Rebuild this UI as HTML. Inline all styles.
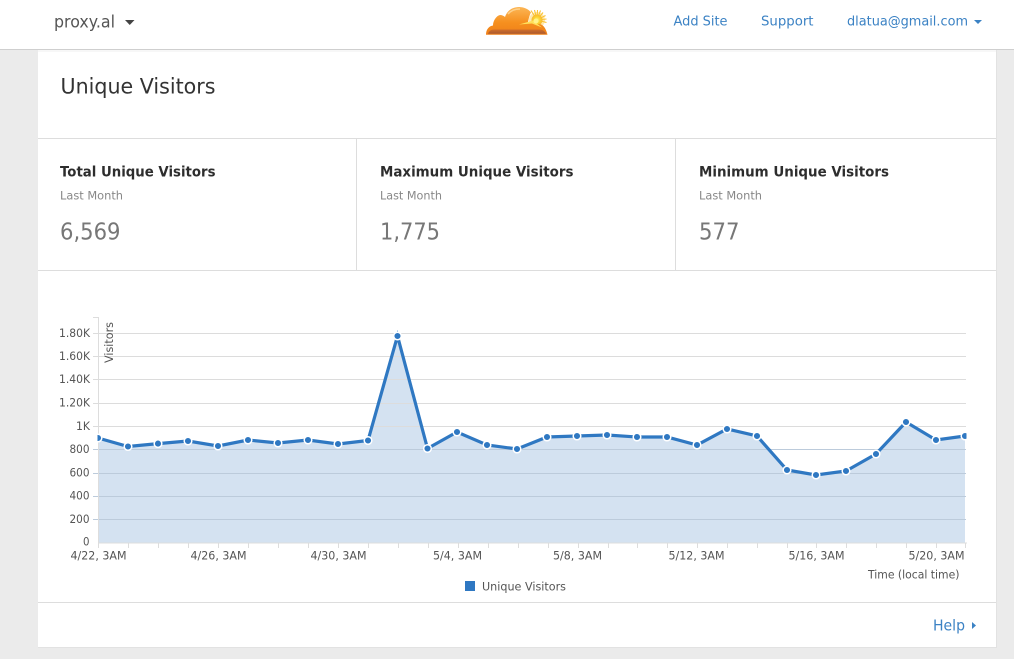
<!DOCTYPE html>
<html><head><meta charset="utf-8"><style>
html,body{margin:0;padding:0;width:1014px;height:659px;overflow:hidden;background:#ebebeb}
svg{display:block}
text{font-family:"DejaVu Sans","Liberation Sans",sans-serif;transform:translateY(-.7px)}
.a{fill:#555;font-size:11.500px}
text.v{transform:translate(113px,363px) rotate(-90deg);transform-origin:0 0}
</style></head><body>
<svg width="1014" height="659" viewBox="0 0 1014 659" xmlns="http://www.w3.org/2000/svg">
<defs>
<linearGradient id="c" x1="0" y1="0" x2="0" y2="1"><stop offset="0" stop-color="#fcb655"/><stop offset=".55" stop-color="#f6901f"/><stop offset="1" stop-color="#ef7f18"/></linearGradient>
<linearGradient id="b" x1="0" y1="0" x2="0" y2="1"><stop offset="0" stop-color="#d26f2a"/><stop offset="1" stop-color="#a9592f"/></linearGradient>
<radialGradient id="s"><stop offset="0" stop-color="#fff27a"/><stop offset=".6" stop-color="#fbd02e"/><stop offset="1" stop-color="#f9b82f"/></radialGradient>
<clipPath id="pc"><rect x="97.500" y="300" width="869" height="245"/></clipPath>
</defs>
<rect width="1014" height="659" fill="#ebebeb"/>
<rect x="38" y="50" width="959" height="598" fill="#e2e2e2"/>
<rect x="38" y="50" width="958" height="597" fill="#fff"/>
<rect x="38" y="50" width="958" height="2" fill="#f7f7f7"/>
<rect x="0" y="0" width="1014" height="49" fill="#fff"/>
<rect x="0" y="49" width="1014" height="1" fill="#cfcfcf"/>

<text x="54" y="28" font-size="17" fill="#555" textLength="61" lengthAdjust="spacingAndGlyphs">proxy.al</text>
<path d="M125 20h9.500l-4.750 5z" fill="#444"/>

<!-- logo -->
<g>
<circle cx="537" cy="20" r="8" fill="#fde08a" opacity=".7"/>
<g stroke="#fbc233" stroke-width="1.100">
<path d="M537 20L531 10.500M537 20L534.500 10M537 20L537.500 10M537 20L540.500 10.500M537 20L543 12.500M537 20L545.500 15.500M537 20L546.500 19M537 20L546.500 22.500"/>
</g>
<circle cx="537" cy="20" r="5.500" fill="url(#s)"/>
<path d="M486 34.700C486 29.500 489 26 493 25.500C493 21 496 16 500 15C502 15 504 16 505 17C507 11 512 7 519 7C524 7 528.500 9 531 12.500C529.500 15 528.500 19 528 22.500L537 24.300C541.500 23 545.500 26.500 547.500 34.700Z" fill="url(#c)"/>
<path d="M488 33.800C489 31 491 29.500 494 29.500H539C542.500 29.500 545 31 546 33.800Z" fill="url(#b)"/>
<path d="M519 24.500L533 20.500L542 27.500L532 23.500Z" fill="#ffe05a"/>
<circle cx="536" cy="21" r="2.500" fill="#fff38a"/>
<path d="M508 14C511 10.500 515 9 520 9" stroke="#fdd08a" stroke-width="1.500" fill="none"/>
</g>

<text x="673.500" y="26" font-size="13.700" fill="#3b82c4" textLength="54" lengthAdjust="spacingAndGlyphs">Add Site</text>
<text x="761" y="26" font-size="13.700" fill="#3b82c4" textLength="52.500" lengthAdjust="spacingAndGlyphs">Support</text>
<text x="847" y="26" font-size="13.700" fill="#3b82c4" textLength="121" lengthAdjust="spacingAndGlyphs">dlatua@gmail.com</text>
<path d="M974 20h8l-4 4z" fill="#3b82c4"/>

<text x="60.500" y="94" font-size="21.500" fill="#333" textLength="155" lengthAdjust="spacingAndGlyphs">Unique Visitors</text>

<rect x="38" y="138" width="958" height="1" fill="#ddd"/>
<rect x="38" y="270" width="958" height="1" fill="#ddd"/>
<rect x="38" y="602" width="958" height="1" fill="#ddd"/>
<rect x="356" y="139" width="1" height="131" fill="#ddd"/>
<rect x="675" y="139" width="1" height="131" fill="#ddd"/>

<g font-size="14" font-weight="bold" fill="#2d2d2d">
<text x="60" y="177" textLength="155.500" lengthAdjust="spacingAndGlyphs">Total Unique Visitors</text>
<text x="380" y="177" textLength="193.500" lengthAdjust="spacingAndGlyphs">Maximum Unique Visitors</text>
<text x="699" y="177" textLength="190" lengthAdjust="spacingAndGlyphs">Minimum Unique Visitors</text>
</g>
<g font-size="11.700" fill="#888">
<text x="60" y="200" textLength="63" lengthAdjust="spacingAndGlyphs">Last Month</text>
<text x="380" y="200" textLength="62" lengthAdjust="spacingAndGlyphs">Last Month</text>
<text x="699" y="200" textLength="63" lengthAdjust="spacingAndGlyphs">Last Month</text>
</g>
<g font-size="23.500" fill="#777">
<text x="60" y="240" textLength="60.500" lengthAdjust="spacingAndGlyphs">6,569</text>
<text x="380" y="240" textLength="60" lengthAdjust="spacingAndGlyphs">1,775</text>
<text x="699" y="240" textLength="40.500" lengthAdjust="spacingAndGlyphs">577</text>
</g>

<!-- chart -->
<path d="M98 438L128 446.500 158 443.600 188 441 218 446 248 440 278 443 308 440 338 444 368 440.500 397.500 336 427.500 448.500 457 432 487 445 517 449 547 437 577 436 607 435 637 437 667 437 697 445 727 429 757 436 787 470 816 475 846 471 876 454 906 422 936 440 965 436V542.500H98z" fill="#d4e2f1"/>
<g stroke="#dcdcdc" stroke-width="1">
<path d="M93 333.500H966M93 356.500H966M93 379.500H966M93 403.500H966M93 426.500H966"/>
</g>
<g stroke="#bccbdb" stroke-width="1">
<path d="M93 449.500H966M93 473.500H966M93 496.500H966M93 519.500H966"/>
</g>
<path d="M93 317.500H98.500V543H967M98.500 543v5M128.500 543v5M158.500 543v5M188.500 543v5M218.500 543v5M248.500 543v5M278.500 543v5M308.500 543v5M338.500 543v5M368.500 543v5M398.500 543v5M428.500 543v5M458.500 543v5M488.500 543v5M518.500 543v5M548.500 543v5M578.500 543v5M608.500 543v5M637.500 543v5M667.500 543v5M697.500 543v5M727.500 543v5M757.500 543v5M787.500 543v5M816.500 543v5M846.500 543v5M876.500 543v5M906.500 543v5M936.500 543v5M965.500 543v5" stroke="#ddd" fill="none"/>
<g clip-path="url(#pc)">
<path d="M98 438L128 446.500 158 443.600 188 441 218 446 248 440 278 443 308 440 338 444 368 440.500 397.500 336 427.500 448.500 457 432 487 445 517 449 547 437 577 436 607 435 637 437 667 437 697 445 727 429 757 436 787 470 816 475 846 471 876 454 906 422 936 440 965 436" fill="none" stroke="#2f78c2" stroke-width="3.200"/>
<g fill="#2f78c2" stroke="#fff" stroke-width="1.500">
<circle cx="98" cy="438" r="3.800"/><circle cx="128" cy="446.500" r="3.800"/><circle cx="158" cy="443.600" r="3.800"/><circle cx="188" cy="441" r="3.800"/><circle cx="218" cy="446" r="3.800"/><circle cx="248" cy="440" r="3.800"/><circle cx="278" cy="443" r="3.800"/><circle cx="308" cy="440" r="3.800"/><circle cx="338" cy="444" r="3.800"/><circle cx="368" cy="440.500" r="3.800"/><circle cx="397.500" cy="336" r="3.800"/><circle cx="427.500" cy="448.500" r="3.800"/><circle cx="457" cy="432" r="3.800"/><circle cx="487" cy="445" r="3.800"/><circle cx="517" cy="449" r="3.800"/><circle cx="547" cy="437" r="3.800"/><circle cx="577" cy="436" r="3.800"/><circle cx="607" cy="435" r="3.800"/><circle cx="637" cy="437" r="3.800"/><circle cx="667" cy="437" r="3.800"/><circle cx="697" cy="445" r="3.800"/><circle cx="727" cy="429" r="3.800"/><circle cx="757" cy="436" r="3.800"/><circle cx="787" cy="470" r="3.800"/><circle cx="816" cy="475" r="3.800"/><circle cx="846" cy="471" r="3.800"/><circle cx="876" cy="454" r="3.800"/><circle cx="906" cy="422" r="3.800"/><circle cx="936" cy="440" r="3.800"/><circle cx="965" cy="436" r="3.800"/>
</g>
</g>

<g class="a">
<text x="59" y="337.500" textLength="31" lengthAdjust="spacingAndGlyphs">1.80K</text>
<text x="59" y="360.500" textLength="31" lengthAdjust="spacingAndGlyphs">1.60K</text>
<text x="59" y="383.500" textLength="31" lengthAdjust="spacingAndGlyphs">1.40K</text>
<text x="59" y="407" textLength="31" lengthAdjust="spacingAndGlyphs">1.20K</text>
<text x="76" y="430.500" textLength="14" lengthAdjust="spacingAndGlyphs">1K</text>
<text x="69.500" y="453.500" textLength="20" lengthAdjust="spacingAndGlyphs">800</text>
<text x="69.500" y="477" textLength="20" lengthAdjust="spacingAndGlyphs">600</text>
<text x="69.500" y="500" textLength="20" lengthAdjust="spacingAndGlyphs">400</text>
<text x="69.500" y="523.500" textLength="20" lengthAdjust="spacingAndGlyphs">200</text>
<text x="83" y="546" textLength="6.500" lengthAdjust="spacingAndGlyphs">0</text>
</g>
<text class="a v" textLength="41" lengthAdjust="spacingAndGlyphs">Visitors</text>
<g class="a">
<text x="70.500" y="560" textLength="56" lengthAdjust="spacingAndGlyphs">4/22, 3AM</text>
<text x="190.500" y="560" textLength="56" lengthAdjust="spacingAndGlyphs">4/26, 3AM</text>
<text x="310.500" y="560" textLength="56" lengthAdjust="spacingAndGlyphs">4/30, 3AM</text>
<text x="433" y="560" textLength="49" lengthAdjust="spacingAndGlyphs">5/4, 3AM</text>
<text x="553" y="560" textLength="49" lengthAdjust="spacingAndGlyphs">5/8, 3AM</text>
<text x="668.500" y="560" textLength="56" lengthAdjust="spacingAndGlyphs">5/12, 3AM</text>
<text x="788.500" y="560" textLength="56" lengthAdjust="spacingAndGlyphs">5/16, 3AM</text>
<text x="908.500" y="560" textLength="56" lengthAdjust="spacingAndGlyphs">5/20, 3AM</text>
<text x="868" y="579" textLength="91.500" lengthAdjust="spacingAndGlyphs">Time (local time)</text>
<text x="482" y="591" textLength="84" lengthAdjust="spacingAndGlyphs">Unique Visitors</text>
</g>
<rect x="465" y="581" width="10" height="10" fill="#2f78c2"/>

<text x="933" y="631" font-size="15.500" fill="#3b82c4" textLength="32" lengthAdjust="spacingAndGlyphs">Help</text>
<path d="M972 622l4 3.500-4 3.500z" fill="#3b82c4"/>
</svg>
</body></html>
